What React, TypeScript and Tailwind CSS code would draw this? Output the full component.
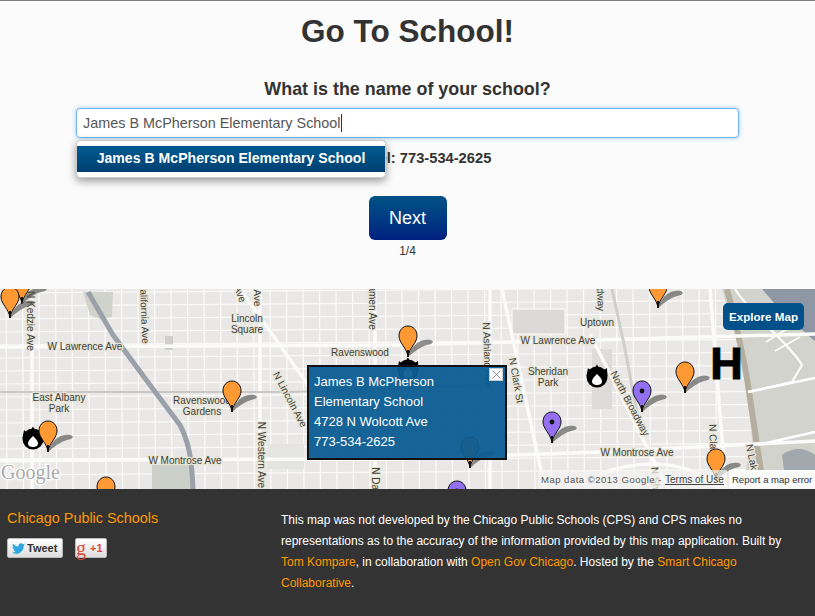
import { FaTwitter } from "react-icons/fa";

const range = (a: number, b: number, s: number) => {
  const out: number[] = [];
  for (let i = a; i <= b; i += s) out.push(i);
  return out;
};

function Pin({ x, y, color, dot }: { x: number; y: number; color: string; dot?: boolean }) {
  return (
    <g transform={`translate(${x} ${y})`}>
      <path d="M0 0 C5 -4 12 -11 23 -13 C27 -15 24 -18 17 -17 C9 -16 3 -10 0 0Z" fill="#555" opacity="0.65" />
      <path d="M0 0 C-1 -9 -9 -14 -9 -21 C-9 -27 -5 -31 0 -31 C5 -31 9 -27 9 -21 C9 -14 1 -9 0 0Z" fill={color} stroke="#111" strokeWidth="1" />
      <path d="M-1 0 L-1 -7 L1 -7 L1 0Z" fill="#111" />
      {dot && <circle cx="0" cy="-21" r="2.400" fill="#111" />}
    </g>
  );
}

function Fire({ x, y }: { x: number; y: number }) {
  return (
    <g transform={`translate(${x} ${y})`}>
      <circle cx="0" cy="1" r="10.500" fill="#000" />
      <path d="M-10.500 0 L-9 -8 L-5 -4 L0 -11.500 L4 -4 L10 -8 L10.500 0Z" fill="#000" />
      <path d="M0 -2 C2 0 5 3 5 5.500 C5 8 2.500 9 0 9 C-2.500 9 -5 8 -5 5.500 C-5 3 -2 0 0 -2Z" fill="#fff" />
    </g>
  );
}

function L({ x, y, r, size = 10, children }: { x: number; y: number; r?: number; size?: number; children: string }) {
  return (
    <text
      x={x}
      y={y}
      textAnchor="middle"
      transform={r ? `rotate(${r} ${x} ${y})` : undefined}
      fontSize={size}
      fill="#3f3f3a"
      stroke="#e8e6d8"
      strokeWidth="2.500"
      paintOrder="stroke"
      strokeLinejoin="round"
    >
      {children}
    </text>
  );
}

function MapArt() {
  return (
    <svg viewBox="0 0 815 200" className="block h-[200px] w-[815px]" fontFamily="'Liberation Sans', sans-serif">
      <rect width="815" height="200" fill="#e9e8e6" />
      {/* minor streets */}
      <g stroke="#fbfbfa" strokeWidth="1.200">
        {range(4, 196, 13).map((y) => (
          <line key={`h${y}`} x1="0" y1={y} x2="815" y2={y - 6} />
        ))}
        {range(6, 720, 16.500).map((x) => (
          <line key={`v${x}`} x1={x} y1="0" x2={x + 1} y2="200" />
        ))}
      </g>
      {/* blocks of larger sites */}
      <rect x="165" y="47" width="8" height="14" fill="#cfcfcb" />
      <path d="M512 20 H565 V45 H512Z" fill="#dcdad8" stroke="#fff" />
      <path d="M592 60 H612 V120 H592Z" fill="#dddcda" />
      <rect x="268" y="155" width="36" height="25" fill="#e4e4e0" />
      {/* parks */}
      <path d="M83 3 L113 3 L112 28 L100 30 L90 26Z" fill="#d0d3cc" />
      <path d="M152 176 H193 V200 H152Z" fill="#cdd0c9" />
      {/* lake front */}
      <path d="M722 0 H815 V200 H742 L752 150 L748 95 L735 45Z" fill="#d2d3cc" />
      <path d="M762 0 H815 V52 C800 40 785 25 775 15Z" fill="#8f97a4" />
      <path d="M782 166 C795 156 808 160 815 166 V196 H786Z" fill="#a2a8ae" />
      <path d="M727 0 C735 30 745 75 748 96 L758 163 L764 200" fill="none" stroke="#b5ae9e" strokeWidth="6" />
      <path d="M735 0 C750 25 790 55 802 76 L792 93 L748 103" fill="none" stroke="#fff" strokeWidth="2" />
      <path d="M748 103 L815 89" fill="none" stroke="#fff" strokeWidth="2.500" />
      <path d="M758 156 L815 143" fill="none" stroke="#fff" strokeWidth="2.500" />
      <path d="M766 53 L790 38 M775 62 L800 48" fill="none" stroke="#fff" strokeWidth="1.500" />
      {/* major roads */}
      <g stroke="#fbfbfa" strokeWidth="3.500" fill="none">
        <path d="M0 58 L400 56 L815 45" />
        <path d="M0 171 L400 170 L600 163 L815 152" />
        <path d="M32 0 V200" />
        <path d="M260 0 V200" />
        <path d="M375 0 V200" />
        <path d="M490 0 V200" />
        <path d="M502 0 L545 200" />
        <path d="M240 0 L345 148" />
        <path d="M590 45 L668 200" />
        <path d="M710 0 L726 200" />
        <path d="M600 185 C640 170 690 170 720 200" />
      </g>
      {/* rail and river */}
      <path d="M0 103 H290 L490 96" stroke="#c8c8c6" strokeWidth="2" fill="none" />
      <path d="M612 0 L625 60 L640 140" stroke="#cfcfcd" strokeWidth="3" fill="none" />
      <path d="M88 3 L113 46 L150 96 L180 136 C190 155 192 175 193 200" stroke="#9aa1a9" strokeWidth="5" fill="none" strokeLinejoin="round" />
      {/* labels */}
      <L x={27} y={32} r={90}>N Kedzie Ave</L>
      <L x={141} y={24} r={88}>California Ave</L>
      <L x={237} y={6} r={70}>Ave</L>
      <L x={254} y={9} r={88}>Ave</L>
      <L x={247} y={33}>Lincoln</L>
      <L x={247} y={44}>Square</L>
      <L x={85} y={61}>W Lawrence Ave</L>
      <L x={369} y={15} r={90}>Damen Ave</L>
      <L x={360} y={67}>Ravenswood</L>
      <L x={59} y={112}>East Albany</L>
      <L x={59} y={123}>Park</L>
      <L x={202} y={115}>Ravenswood</L>
      <L x={202} y={126}>Gardens</L>
      <L x={287} y={112} r={62}>N Lincoln Ave</L>
      <L x={185} y={175}>W Montrose Ave</L>
      <L x={258} y={166} r={90}>N Western Ave</L>
      <L x={372} y={209} r={90}>N Damen Ave</L>
      <L x={484} y={66} r={88}>N Ashland Ave</L>
      <L x={513} y={92} r={80}>N Clark St</L>
      <L x={597} y={37}>Uptown</L>
      <L x={558} y={55}>W Lawrence Ave</L>
      <L x={548} y={86}>Sheridan</L>
      <L x={548} y={97}>Park</L>
      <L x={627} y={116} r={62}>North Broadway</L>
      <L x={637} y={167}>W Montrose Ave</L>
      <L x={597} y={0} r={88}>Broadway</L>
      <L x={710} y={158} r={88}>N Clark St</L>
      <L x={752} y={186} r={78}>N Lake Shore</L>
      <L x={654} y={211} r={85}>N Sheridan Rd</L>
      {/* markers */}
      <Pin x={22} y={15} color="#ff9933" />
      <Pin x={10} y={29} color="#ff9933" />
      <Fire x={33} y={149} />
      <Pin x={48} y={163} color="#ff9933" />
      <Pin x={106} y={219} color="#ff9933" />
      <Pin x={232} y={123} color="#ff9933" />
      <Fire x={408} y={80} />
      <Pin x={408} y={68} color="#ff9933" />
      <Pin x={470} y={179} color="#ff9933" />
      <Pin x={457} y={223} color="#9370f0" dot />
      <Pin x={552} y={154} color="#9370f0" dot />
      <Fire x={597} y={87} />
      <Pin x={642} y={123} color="#9370f0" dot />
      <Pin x={658} y={19} color="#ff9933" />
      <Pin x={685} y={104} color="#ff9933" />
      <Pin x={716} y={191} color="#ff9933" />
      <text x="726.500" y="90" textAnchor="middle" fontSize="45" fontWeight="bold" fill="#000" stroke="#000" strokeWidth="1">H</text>
      {/* attribution */}
      <text x="1" y="190" fontFamily="'Liberation Serif', serif" fontSize="20" fill="#a9aaa9" stroke="#fff" strokeWidth="2.500" paintOrder="stroke">Google</text>
      <rect x="538" y="181" width="189" height="19" fill="#f3f3f1" opacity="0.7" />
      <text x="541" y="194" fontSize="9.500" fill="#555" letterSpacing="0.500">Map data ©2013 Google -</text>
      <text x="665" y="194" fontSize="10" fill="#444" textDecoration="underline">Terms of Use</text>
      <rect x="729" y="181" width="86" height="19" fill="#fafaf9" />
      <text x="732" y="194" fontSize="9.500" fill="#333">Report a map error</text>
    </svg>
  );
}

export default function App() {
  return (
    <div className="flex h-[616px] w-[815px] flex-col overflow-hidden bg-[#fbfbfb] font-['Liberation_Sans',sans-serif] text-[#333]">
      <header className="relative flex h-[289px] flex-col items-center border-t border-[#7d7d7d]">
        <h1 className="mt-[12px] text-[31.5px] leading-[36px] font-bold">Go To School!</h1>
        <h2 className="mt-[22px] text-[17.9px] leading-[36px] font-bold">What is the name of your school?</h2>
        <div className="mt-[1px] flex h-[30px] w-[663px] items-center rounded-[4px] border border-[#74b4f0] bg-white px-[6px] text-[14.4px] text-[#555] shadow-[0_0_4px_rgba(82,168,236,0.6)]">
          <span className="border-r border-[#333] leading-[18px]">James B McPherson Elementary School</span>
        </div>
        <p className="mt-[10px] pr-[6px] text-[14.7px] leading-[20px] font-bold">School Tel: 773-534-2625</p>
        <div className="absolute top-[139px] left-[76px] w-[310px] rounded-[4px] border border-[#ccc] bg-white py-[5px] shadow-[0_3px_8px_rgba(0,0,0,0.4)]">
          <div className="flex h-[26px] items-center justify-center bg-linear-to-b from-[#005c90] to-[#003f72] text-[14.1px] font-bold text-white">
            James B McPherson Elementary School
          </div>
        </div>
        <button className="mt-[28px] h-[44px] w-[78px] rounded-[6px] bg-linear-to-b from-[#005287] to-[#001f7e] text-[18px] text-white">
          Next
        </button>
        <p className="mt-[4px] text-[12px] leading-[14px]">1/4</p>
      </header>

      <section className="relative h-[200px] overflow-hidden">
        <MapArt />
        <div className="absolute top-[76px] left-[307px] h-[95px] w-[200px] border-[2px] border-[#111] bg-[#0a5c92]/95 px-[5px] py-[5px] text-[13px] leading-[20px] text-white">
          <div>James B McPherson</div>
          <div>Elementary School</div>
          <div>4728 N Wolcott Ave</div>
          <div>773-534-2625</div>
          <div className="absolute top-[1px] right-[2px] flex h-[13px] w-[14px] items-center justify-center border border-[#ccc] bg-white">
            <svg viewBox="0 0 10 10" className="h-[9px] w-[9px]" stroke="#888" strokeWidth="1">
              <path d="M0.500 0.500 L9.500 9.500 M9.500 0.500 L0.500 9.500" />
            </svg>
          </div>
        </div>
        <button className="absolute top-[14px] left-[723px] h-[27px] w-[81px] rounded-[5px] bg-[#00508a] text-[11.6px] font-bold text-white">
          Explore Map
        </button>
      </section>

      <footer className="flex flex-1 bg-[#333] pt-[21px]">
        <div className="w-[281px] pl-[7px]">
          <div className="text-[14.4px] leading-[16px] text-[#ff9900]">Chicago Public Schools</div>
          <div className="mt-[12px] flex gap-[12px]">
            <div className="flex h-[20px] w-[56px] items-center gap-[2px] rounded-[2px] border border-[#bbb] bg-linear-to-b from-[#fff] to-[#dedede] pl-[4px] text-[11px] font-bold text-[#333]">
              <FaTwitter className="h-[13px] w-[13px] text-[#2fa7e0]" />
              Tweet
            </div>
            <div className="flex h-[20px] w-[32px] items-center gap-[4px] rounded-[2px] border border-[#bbb] bg-linear-to-b from-[#fff] to-[#dedede] text-[#dd4b39]">
              <span className="font-['Liberation_Serif',serif] text-[20px] leading-[14px]">g</span>
              <span className="text-[11px] font-bold">+1</span>
            </div>
          </div>
        </div>
        <p className="w-[510px] text-[12px] leading-[21px] text-white">
          This map was not developed by the Chicago Public Schools (CPS) and CPS makes no representations as to the accuracy of the information provided by this map application. Built by{" "}
          <span className="text-[#ff9900]">Tom Kompare</span>, in collaboration with{" "}
          <span className="text-[#ff9900]">Open Gov Chicago</span>. Hosted by the{" "}
          <span className="text-[#ff9900]">Smart Chicago Collaborative</span>.
        </p>
      </footer>
    </div>
  );
}
